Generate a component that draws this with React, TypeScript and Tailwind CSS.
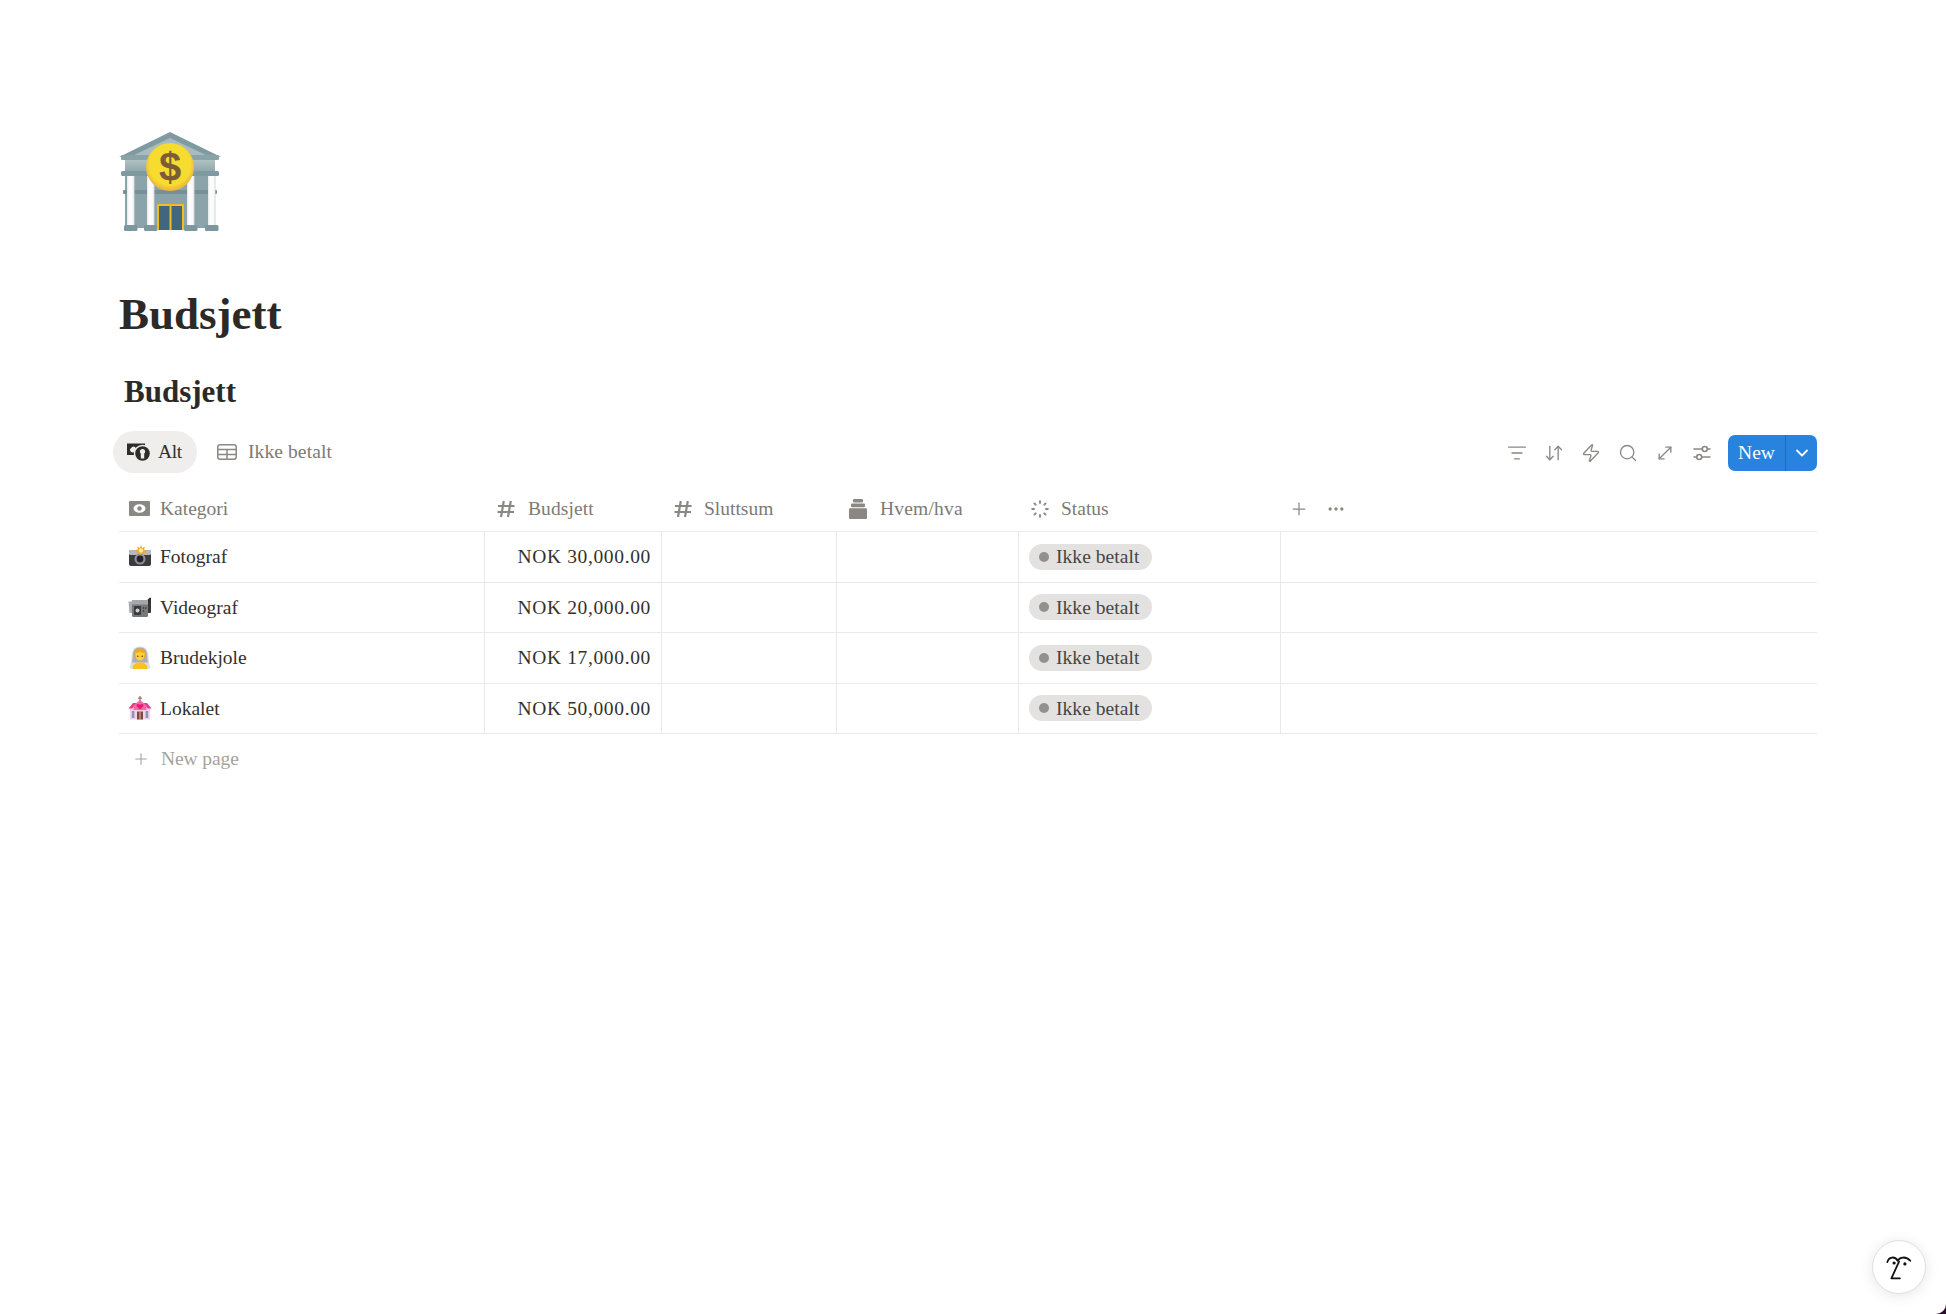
import React from "react";
import { ArrowDownUp, ChevronDown, Ellipsis, ListFilter, MoveDiagonal, Plus, Search, Zap } from "lucide-react";

const BankIcon = () => (
  <svg viewBox="9 10 102 104" className="block w-[102px] h-[104px]">
    <defs>
      <linearGradient id="frieze" x1="0" y1="0" x2="0" y2="1">
        <stop offset="0" stopColor="#b0c2c3" />
        <stop offset="1" stopColor="#8ea6aa" />
      </linearGradient>
      <linearGradient id="column" x1="0" y1="0" x2="1" y2="0">
        <stop offset="0" stopColor="#e3e8ea" />
        <stop offset="0.3" stopColor="#ffffff" />
        <stop offset="0.8" stopColor="#f8f8f8" />
        <stop offset="1" stopColor="#ccd5d8" />
      </linearGradient>
      <radialGradient id="coin" cx="0.5" cy="0.45" r="0.55">
        <stop offset="0.78" stopColor="#f6dc2e" />
        <stop offset="0.9" stopColor="#f1c13c" />
        <stop offset="1" stopColor="#eeb245" />
      </radialGradient>
    </defs>
    <path d="M60 12 L111 37 H9 Z" fill="#7f9aa1" />
    <path d="M60 18 L98 36 H22 Z" fill="#a8bcbf" />
    <rect x="11" y="35" width="98" height="5" rx="1.5" fill="#8aa3a9" />
    <rect x="15" y="40" width="90" height="12" fill="url(#frieze)" />
    <rect x="11" y="51" width="98" height="5" rx="1.5" fill="#7f9aa1" />
    <rect x="15" y="56" width="90" height="52" fill="#8ba4aa" />
    <rect x="13" y="70" width="94" height="4" rx="1" fill="#769098" />
    {[17, 37, 77, 98].map((x) => (
      <g key={x}>
        <rect x={x} y="56" width="7.5" height="50" fill="url(#column)" />
        <rect x={x - 3} y="105" width="13.5" height="6" rx="1.5" fill="#7c979e" />
      </g>
    ))}
    <rect x="47" y="84" width="27" height="26" fill="#f3bd1d" />
    <rect x="49" y="86" width="10.5" height="24" fill="#41667d" />
    <rect x="61.5" y="86" width="10.5" height="24" fill="#41667d" />
    <circle cx="60" cy="47" r="24" fill="url(#coin)" />
    <text x="60" y="61" textAnchor="middle" fontFamily="'Liberation Sans', sans-serif" fontWeight="700" fontSize="40" fill="#7d5c36">$</text>
  </svg>
);

const CameraFlashIcon = () => (
  <svg viewBox="0 0 24 24" className="w-6 h-6">
    <rect x="1" y="5" width="22" height="16" rx="2" fill="#3b3b3d" />
    <rect x="1" y="5" width="22" height="5" rx="1.5" fill="#b5b7ba" />
    <circle cx="12" cy="14" r="5.5" fill="#8e9093" />
    <circle cx="12" cy="14" r="3.4" fill="#242426" />
    <path d="M13 0 L14.2 3 L17 1.5 L16 4.5 L19 5.5 L16 7 L17 9.5 L13.8 8.5 L12.6 10.5 L11.5 8.3 L8.5 9 L9.6 6.6 L7 5.2 L10 4.3 L9.3 1.5 L11.8 3 Z" fill="#f6a623" />
    <circle cx="13" cy="5.5" r="2.2" fill="#fdf0a6" />
  </svg>
);

const VideoCameraIcon = () => (
  <svg viewBox="0 0 24 24" className="w-6 h-6">
    <path d="M17 7 L22 2.5 L23 3 V9 H17 Z" fill="#2f2f31" />
    <rect x="19" y="7" width="4" height="11" rx="1" fill="#38383a" />
    <path d="M0.5 6.5 H5 V18 H1.5 Z" fill="#a9abaf" />
    <rect x="4" y="5" width="16" height="17" rx="1.5" fill="#77797d" />
    <rect x="4" y="5" width="16" height="4.5" fill="#a5a7ab" />
    <rect x="6" y="11" width="7" height="9" rx="1" fill="#3a3a3c" />
    <circle cx="9.5" cy="15.5" r="2" fill="#cfd0d2" />
    <circle cx="15.5" cy="13" r="0.8" fill="#2f2f31" />
    <circle cx="15.5" cy="16" r="0.8" fill="#2f2f31" />
    <circle cx="17.8" cy="13" r="0.8" fill="#2f2f31" />
  </svg>
);

const BrideIcon = () => (
  <svg viewBox="0 0 24 24" className="w-6 h-6">
    <path d="M12 0.5 C5 0.5 3.5 6 3.5 11 C3.5 16 2 19 1.5 22.5 L22.5 22.5 C22 19 20.5 16 20.5 11 C20.5 6 19 0.5 12 0.5 Z" fill="#dcdcdc" />
    <path d="M12 1.5 C7 1.5 5 5 5 9 C5 11 4.5 14 4 16.5 H20 C19.5 14 19 11 19 9 C19 5 17 1.5 12 1.5 Z" fill="#aeaeb0" />
    <path d="M12 2.5 C8 2.5 6.5 5 6.5 8.5 L7 12 H17 L17.5 8.5 C17.5 5 16 2.5 12 2.5 Z" fill="#f5a623" />
    <path d="M12 5.5 C10 7 8.5 7 7.5 7 C7.2 11.5 9 14.5 12 14.5 C15 14.5 16.8 11.5 16.5 7 C15 7 13.5 7 12 5.5 Z" fill="#fcd23a" />
    <path d="M4.5 23 C4.5 18.5 8 16.5 12 16.5 C16 16.5 19.5 18.5 19.5 23 Z" fill="#fcc21b" />
    <circle cx="9.8" cy="10.2" r="0.8" fill="#5b4200" />
    <circle cx="14.2" cy="10.2" r="0.8" fill="#5b4200" />
  </svg>
);

const ChurchIcon = () => (
  <svg viewBox="0 0 24 24" className="w-6 h-6">
    <rect x="11.4" y="0" width="1.2" height="6" fill="#a66a55" />
    <rect x="10" y="1.6" width="4" height="1.1" fill="#a66a55" />
    <rect x="2" y="11" width="20" height="12.5" fill="#f8cfe3" />
    <path d="M0.5 12.5 L5 7 H19 L23.5 12.5 H20 L17 9.5 H7 L4 12.5 Z" fill="#ea3a85" />
    <path d="M12 4 L18.5 9.5 V14 H5.5 V9.5 Z" fill="#f06aa6" />
    <path d="M12 13.5 L8.8 10.3 C7.8 8.8 9.8 7 12 9 C14.2 7 16.2 8.8 15.2 10.3 Z" fill="#e5196f" />
    <rect x="9" y="15.5" width="6" height="8" fill="#7b4a3c" />
    <rect x="11.6" y="15.5" width="0.8" height="8" fill="#f8cfe3" />
    <rect x="3.8" y="15" width="2.6" height="7" fill="#7d9cc4" />
    <rect x="17.6" y="15" width="2.6" height="7" fill="#7d9cc4" />
  </svg>
);

const MoneyTabIcon = () => (
  <svg viewBox="0 0 26 22" className="w-[26px] h-[22px]">
    <path d="M1 2.5 H19 V4.5 A9 9 0 0 0 10.5 14 H1 Z" fill="#2f2d29" />
    <circle cx="7" cy="8.5" r="3" fill="#efeeec" />
    <path d="M4 3 L9.5 3 L4 8 Z" fill="#2f2d29" />
    <circle cx="16.5" cy="12.5" r="8" fill="#2f2d29" stroke="#efeeec" strokeWidth="1.4" />
    <circle cx="16.5" cy="10.6" r="2.6" fill="#efeeec" />
    <rect x="14.8" y="13" width="3.4" height="4.5" fill="#efeeec" />
  </svg>
);

const TableIcon = () => (
  <svg viewBox="0 0 20 16" className="w-5 h-4" fill="none" stroke="#8b8883" strokeWidth="1.5">
    <rect x="0.8" y="0.8" width="18.4" height="14.4" rx="2.2" />
    <path d="M0.8 5.6 H19.2 M0.8 10.4 H19.2 M10 5.6 V15.2" />
  </svg>
);

const CashIcon = () => (
  <svg viewBox="0 0 21 15" className="w-[21px] h-[15px]">
    <rect width="21" height="15" rx="1" fill="#8b8883" />
    <ellipse cx="10.5" cy="7.5" rx="6" ry="4.2" fill="#ffffff" />
    <circle cx="10.5" cy="7.5" r="2.2" fill="#8b8883" />
  </svg>
);

const HashIcon = () => (
  <svg viewBox="0 0 18 18" className="w-[18px] h-[18px]" fill="none" stroke="#8b8883" strokeWidth="2.2">
    <path d="M6.8 1 L4 17 M13.8 1 L11 17 M1 6 H17.5 M0.5 12 H17" />
  </svg>
);

const StackIcon = () => (
  <svg viewBox="0 0 18 20" className="w-[18px] h-5" fill="#8b8883">
    <rect x="4" y="0" width="10" height="3.6" rx="1" />
    <rect x="2" y="4.6" width="14" height="3.6" rx="1" />
    <rect x="0" y="9.2" width="18" height="10.8" rx="1" />
  </svg>
);

const StatusIcon = () => (
  <svg viewBox="0 0 18 18" className="w-[18px] h-[18px]" stroke="#8b8883" strokeWidth="1.9" strokeLinecap="round">
    <path d="M9 1.2 V3 M9 15 V16.8 M1.2 9 H3 M15 9 H16.8 M3.5 3.5 L4.7 4.7 M13.3 13.3 L14.5 14.5 M14.5 3.5 L13.3 4.7 M4.7 13.3 L3.5 14.5" />
  </svg>
);

// two rails with a knob each, lucide's version has three
const SlidersIcon = () => (
  <svg viewBox="0 0 20 20" className="w-5 h-5" fill="none" stroke="#8b8883" strokeWidth="1.6" strokeLinecap="round">
    <path d="M2 6 H10 M15.5 6 H18 M2 14 H4.5 M10 14 H18" />
    <circle cx="12.8" cy="6" r="2.5" />
    <circle cx="7.2" cy="14" r="2.5" />
  </svg>
);

const FaceLogo = () => (
  <svg viewBox="0 0 30 30" className="w-[27px] h-[27px]" fill="none" stroke="#111111" strokeWidth="2" strokeLinecap="round" strokeLinejoin="round">
    <path d="M1.5 9 C3 3 10 2 13 7.5 C15 3.5 22 2 27 7.5" />
    <path d="M14.5 8.5 L6 27 H15.5" />
    <circle cx="9" cy="10" r="1.8" fill="#111111" stroke="none" />
    <circle cx="21" cy="11" r="1.8" fill="#111111" stroke="none" />
  </svg>
);

const rows = [
  { name: "Fotograf", icon: <CameraFlashIcon />, sum: "NOK 30,000.00" },
  { name: "Videograf", icon: <VideoCameraIcon />, sum: "NOK 20,000.00" },
  { name: "Brudekjole", icon: <BrideIcon />, sum: "NOK 17,000.00" },
  { name: "Lokalet", icon: <ChurchIcon />, sum: "NOK 50,000.00" },
];

const cols = "grid grid-cols-[366px_177px_175px_182px_262px_1fr]";

const App = () => {
  return (
    <div className="w-[1946px] h-[1314px] overflow-hidden bg-[#2b0f2b]">
      <div className="relative h-full bg-white rounded-br-[10px] pt-[130px] pl-[119px] pr-[129px] font-['Liberation_Serif',serif] text-[19.5px] text-[#32302c]">
        <BankIcon />

        <h1 className="mt-[53px] h-[54px] text-[45px] leading-[54px] font-bold text-[#2b2a27]">Budsjett</h1>
        <h2 className="mt-[33px] ml-[5px] h-9 text-[31px] leading-9 font-bold text-[#2b2a27]">Budsjett</h2>

        {/* Tabs and toolbar */}
        <div className="mt-[21px] h-[42px] flex items-center justify-between">
          <div className="flex items-center -ml-[6px]">
            <div className="h-[42px] w-[84px] flex items-center gap-[6px] pl-[13px] rounded-full bg-[#efeeec] text-[#32302c]">
              <MoneyTabIcon />
              <span className="tracking-[-0.4px]">Alt</span>
            </div>
            <div className="flex items-center gap-[11px] ml-5 text-[#7d7a75]">
              <TableIcon />
              <span className="tracking-[0.1px]">Ikke betalt</span>
            </div>
          </div>
          <div className="flex items-center text-[#8b8883] mt-[2px]">
            <div className="flex items-center gap-[17px] mr-[16px]">
              <ListFilter size={20} strokeWidth={1.6} />
              <ArrowDownUp size={20} strokeWidth={1.6} />
              <Zap size={20} strokeWidth={1.6} />
              <Search size={20} strokeWidth={1.6} />
              <MoveDiagonal size={20} strokeWidth={1.6} />
              <SlidersIcon />
            </div>
            <div className="h-9 w-[89px] flex rounded-[7px] bg-[#2783de] text-white">
              <div className="w-[58px] flex items-center justify-center border-r border-[#1f6cb8] text-[19.5px]">New</div>
              <div className="flex-1 flex items-center justify-center">
                <ChevronDown size={20} strokeWidth={2.2} />
              </div>
            </div>
          </div>
        </div>

        {/* Table header */}
        <div className={`${cols} mt-[13px] h-[46px] items-center border-b border-[#e9e9e7] text-[#7d7a75]`}>
          <div className="flex items-center gap-[10px] pl-[10px]">
            <CashIcon />
            <span>Kategori</span>
          </div>
          <div className="flex items-center gap-[13px] pl-[12px]">
            <HashIcon />
            <span className="tracking-[0.1px]">Budsjett</span>
          </div>
          <div className="flex items-center gap-3 pl-[12px]">
            <HashIcon />
            <span>Sluttsum</span>
          </div>
          <div className="flex items-center gap-[13px] pl-[12px]">
            <StackIcon />
            <span className="tracking-[0.2px]">Hvem/hva</span>
          </div>
          <div className="flex items-center gap-3 pl-[12px]">
            <StatusIcon />
            <span>Status</span>
          </div>
          <div className="flex items-center gap-[17px] pl-[8px]">
            <Plus size={20} strokeWidth={1.5} className="text-[#8b8883]" />
            <Ellipsis size={20} strokeWidth={2} className="text-[#8b8883]" />
          </div>
        </div>

        {/* Table rows */}
        {rows.map((row) => (
          <div key={row.name} className={`${cols} h-[50.5px] border-b border-[#e9e9e7]`}>
            <div className="flex items-center gap-[8px] pl-[9px] border-r border-[#e9e9e7]">
              {row.icon}
              <span>{row.name}</span>
            </div>
            <div className="flex items-center justify-end pr-[10px] border-r border-[#e9e9e7] tracking-[0.65px]">{row.sum}</div>
            <div className="border-r border-[#e9e9e7]" />
            <div className="border-r border-[#e9e9e7]" />
            <div className="flex items-center pl-[10px] border-r border-[#e9e9e7]">
              <div className="h-[26px] w-[123px] flex items-center gap-[7px] pl-[10px] rounded-full bg-[#e3e2e0] text-[#474543]">
                <span className="w-[10px] h-[10px] rounded-full bg-[#91918e]" />
                <span className="tracking-[0.05px]">Ikke betalt</span>
              </div>
            </div>
            <div />
          </div>
        ))}

        <div className="mt-[12px] h-[26px] flex items-center gap-[11px] pl-[13px] text-[#a5a29c]">
          <Plus size={18} strokeWidth={1.5} />
          <span className="tracking-[-0.1px]">New page</span>
        </div>

        {/* Help button */}
        <div className="absolute right-[20px] bottom-[20px] w-[54px] h-[54px] rounded-full bg-white border border-[#e0e0de] shadow-[0_2px_14px_rgba(0,0,0,0.1)] flex items-center justify-center">
          <FaceLogo />
        </div>
      </div>
    </div>
  );
};

export default App;
